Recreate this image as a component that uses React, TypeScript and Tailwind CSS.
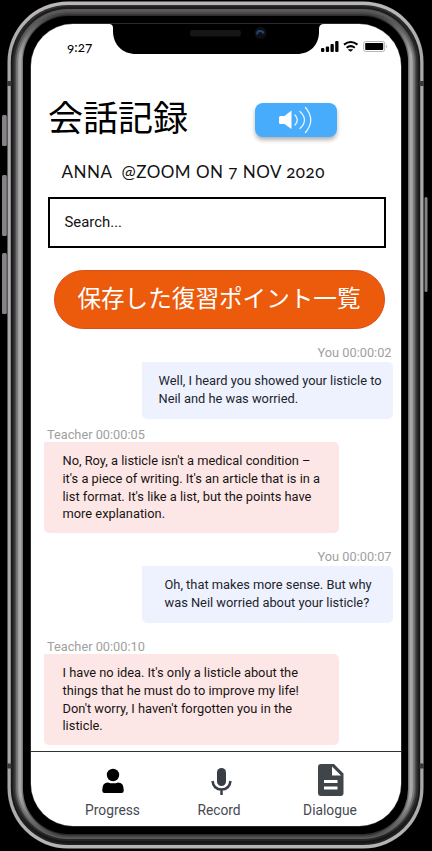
import React from "react";

const frameRings = [
  { x: 6.8, y: 0.8, r: 61, side: "#050505", top: "#050505", bottom: "#050505" },
  { x: 7.5, y: 1.5, r: 60.5, side: "#a9a7a9", top: "#b9b5b8", bottom: "#b5b3b5" },
  { x: 10.8, y: 5, r: 57, side: "#161616", top: "#303030", bottom: "#222222" },
  { x: 12.6, y: 6.5, r: 56, side: "#2d2d2d", top: "#1c1c1c", bottom: "#161616" },
  { x: 14.6, y: 9, r: 54, side: "#4e4e4e", top: "#5a5a5a", bottom: "#262626" },
  { x: 16.2, y: 11, r: 52, side: "#7a7a7a", top: "#555555", bottom: "#5c5c5c" },
  { x: 18.2, y: 12.5, r: 50, side: "#a8a8a8", top: "#444444", bottom: "#484848" },
  { x: 21.6, y: 14.5, r: 47, side: "#777777", top: "#2c2c2c", bottom: "#282828" },
  { x: 23, y: 16, r: 45, side: "#000000", top: "#000000", bottom: "#000000" },
];

function PhoneFrame() {
  return (
    <svg className="absolute inset-0" width="432" height="851" viewBox="0 0 432 851">
      <defs>
        {frameRings.map((f, i) => (
          <linearGradient key={i} id={`ring${i}`} gradientUnits="userSpaceOnUse" x1="0" y1="0" x2="0" y2="851">
            <stop offset="0.018" stopColor={f.top} />
            <stop offset="0.065" stopColor={f.side} />
            <stop offset="0.935" stopColor={f.side} />
            <stop offset="0.982" stopColor={f.bottom} />
          </linearGradient>
        ))}
      </defs>
      <g fill="#858385">
        <rect x="2" y="115" width="5" height="31" rx="1.5" />
        <rect x="2" y="175" width="5" height="61" rx="1.5" />
        <rect x="2" y="253" width="5" height="61" rx="1.5" />
        <rect x="424.500" y="197" width="3" height="95" rx="1.5" />
      </g>
      {frameRings.map((f, i) => (
        <rect key={i} x={f.x} y={f.y} width={431 - 2 * f.x} height={850 - 2 * f.y} rx={f.r} fill={`url(#ring${i})`} />
      ))}
      <g fill="#3a3a3a">
        <rect x="7" y="81" width="4.500" height="5" />
        <rect x="419.500" y="81" width="4.500" height="5" />
        <rect x="7" y="763.500" width="4.500" height="5" />
        <rect x="419.500" y="763.500" width="4.500" height="5" />
      </g>
    </svg>
  );
}

function Notch() {
  return (
    <svg className="absolute left-[75px] top-0" width="252" height="31" viewBox="106 24 252 31">
      <path d="M106 23H328V24H324Q319 24 319 29V32C319 45 310 54 297 54H136C123 54 113 45 113 31V28Q113 24 109 24H106Z" fill="#000" />
      <rect x="190" y="30" width="51" height="6.5" rx="3" fill="#161616" />
      <circle cx="260.500" cy="33" r="6" fill="#0d0f14" />
      <path d="M257.500 34.500Q256.500 31 260 31Q263 31 263.500 33.500" stroke="#214777" strokeWidth="2" fill="none" />
    </svg>
  );
}

function StatusIcons() {
  return (
    <svg className="absolute left-[289px] top-[16px]" width="70" height="14" viewBox="320 40 70 14">
      <g fill="#000">
        <rect x="321" y="48" width="3.300" height="4" rx="1" />
        <rect x="325.800" y="46.500" width="3.300" height="5.500" rx="1" />
        <rect x="330.500" y="44" width="3.300" height="8" rx="1" />
        <rect x="335.200" y="41" width="3.300" height="11" rx="1" />
        <path d="M348.500 49.200 352.500 49.200Q353.500 49.200 352.700 50L351 51.600 350.200 51.600 348.300 50Q347.500 49.200 348.500 49.200Z" />
      </g>
      <g fill="none" stroke="#000" strokeWidth="2">
        <path d="M344 44.600Q350.700 39.500 357.500 44.600" />
        <path d="M346.600 47.700Q350.700 44.600 354.800 47.700" />
      </g>
      <rect x="363.700" y="41.500" width="21" height="10" rx="2" fill="none" stroke="#b4b4b4" />
      <rect x="365.200" y="43" width="18" height="7" rx="0.700" fill="#000" />
      <path d="M386 45Q388 46.500 386 48Z" fill="#aaa" />
    </svg>
  );
}

type MessageProps = { who: string; time: string; lines: string[]; own?: boolean; indent?: string };

function Message({ who, time, lines, own, indent = "pl-[17px]" }: MessageProps) {
  return (
    <div className={own ? "ml-[110.5px] w-[251.5px]" : "ml-[13px] w-[295px]"}>
      <p
        className={`whitespace-nowrap text-[12.750px] leading-[15px] text-[#a0a0a0] ${
          own ? "h-[17px] pr-[1.5px] text-right" : "h-[15px] pl-[3px]"
        }`}
      >
        {who} {time}
      </p>
      <div
        className={`whitespace-nowrap rounded-r-[5px] rounded-bl-[5px] pt-[10px] text-[12.850px] leading-[17.800px] ${
          own ? `h-[57px] bg-[#eef2fe] text-[#22242c] ${indent}` : "h-[91px] bg-[#fde7e6] pl-[18.5px] text-[#181313]"
        }`}
      >
        {lines.map((l) => (
          <p key={l}>{l}</p>
        ))}
      </div>
    </div>
  );
}

export default function App() {
  return (
    <div className="relative h-[851px] w-[432px] overflow-hidden bg-black pl-[31px] pt-6 font-[Roboto,sans-serif]">
      <PhoneFrame />
      <main className="relative flex h-[801.5px] w-[369.5px] flex-col overflow-hidden rounded-[42px] bg-white shadow-[0_0_0_0.5px_#555]">
        <Notch />
        <StatusIcons />
        <div className="h-[72px] shrink-0 pl-[36px] pt-[15px] font-[Lato,sans-serif] text-[13.500px] leading-4 text-black [font-feature-settings:'onum']">9:27</div>
        <header className="flex h-[58px] shrink-0 pl-[17px]">
          <h1 className="-mt-[2px] w-[206.5px] whitespace-nowrap font-['Noto_Sans_CJK_JP',sans-serif] text-[35px] leading-[44px] text-black">会話記録</h1>
          <button className="mt-[7px] flex h-[34px] w-[82px] items-center justify-center rounded-[8px] bg-[#46acfb] shadow-[0_3px_4px_rgba(0,0,0,0.3)]">
            <svg width="36" height="30" viewBox="0 0 36 30" fill="none">
              <path d="M2.500 11H6.500L13.500 5.500V24L6.500 19H2.500Q1 19 1 17.500V12.500Q1 11 2.500 11Z" fill="#fff" />
              <g stroke="#e5f4ff" strokeWidth="1.300" strokeLinecap="round">
                <path d="M17 10Q21.500 15 17 20" />
                <path d="M22 6.500Q31 15 22 23.500" />
                <path d="M27.500 2.500Q38 15 27.500 27.500" />
              </g>
            </svg>
          </button>
        </header>
        <p className="h-[43px] shrink-0 whitespace-pre pl-[30.5px] pt-[7px] font-[Lato,sans-serif] text-[17px] leading-[22px] tracking-[0.480px] text-[#111] [font-feature-settings:'onum']">ANNA  @ZOOM ON 7 NOV 2020</p>
        <div className="ml-[16.5px] flex h-[51px] w-[338.5px] shrink-0 items-center border-2 border-black pl-[15px] text-[14.900px] text-[#111]">Search...</div>
        <button className="ml-[22.5px] mt-[22px] flex h-[59px] w-[331px] shrink-0 items-center justify-center whitespace-nowrap rounded-full border border-[#dc4c1c] bg-[#ec5a0c] pb-[3px] font-['Noto_Sans_CJK_JP',sans-serif] text-[23.600px] text-white">保存した復習ポイント一覧</button>
        <section className="flex h-[422px] shrink-0 flex-col pt-4">
          <Message own who="You" time="00:00:02" lines={["Well, I heard you showed your listicle to", "Neil and he was worried."]} />
          <div className="h-2 shrink-0" />
          <Message who="Teacher" time="00:00:05" lines={["No, Roy, a listicle isn't a medical condition –", "it's a piece of writing. It's an article that is in a", "list format. It's like a list, but the points have", "more explanation."]} />
          <div className="h-4 shrink-0" />
          <Message own who="You" time="00:00:07" indent="pl-[23px]" lines={["Oh, that makes more sense. But why", "was Neil worried about your listicle?"]} />
          <div className="h-4 shrink-0" />
          <Message who="Teacher" time="00:00:10" lines={["I have no idea. It's only a listicle about the", "things that he must do to improve my life!", "Don't worry, I haven't forgotten you in the", "listicle."]} />
        </section>
        <nav className="flex h-[75px] shrink-0 border-t border-[#333] pl-[28px] text-[13.800px] leading-4 text-[#474952]">
          <div className="flex w-[107px] flex-col items-center">
            <svg className="mb-[5px] mt-[13px]" width="40" height="32" viewBox="0 0 40 32">
              <circle cx="20" cy="10" r="6.200" fill="#000" />
              <path d="M9.300 24.500Q9.300 17.500 15 17.500Q20 19.200 25 17.500Q30.700 17.500 30.700 24.500V26Q30.700 28 28.500 28H11.500Q9.300 28 9.300 26Z" fill="#000" />
            </svg>
            <span>Progress</span>
          </div>
          <div className="flex w-[106px] flex-col items-center">
            <svg className="mb-[5px] mt-[13px]" width="40" height="32" viewBox="0 0 40 32">
              <rect x="18" y="3" width="9" height="18" rx="4.500" fill="#383d48" />
              <path d="M13.500 16Q14.500 24.500 22.500 24.500Q30.500 24.500 31.500 16M22.500 24V30" fill="none" stroke="#383d48" strokeWidth="2.500" />
            </svg>
            <span>Record</span>
          </div>
          <div className="flex w-[116px] flex-col items-center">
            <svg className="mb-[6px] mt-[12px]" width="40" height="32" viewBox="0 0 40 32">
              <path fillRule="evenodd" d="M11 0H24L33.500 9.500V29Q33.500 32 30.500 32H11Q8 32 8 29V3Q8 0 11 0ZM22 2.500V11.500H31ZM14 16V19H27.500V16ZM14 22.500V25.500H27.500V22.500Z" fill="#40454a" />
            </svg>
            <span>Dialogue</span>
          </div>
        </nav>
      </main>
    </div>
  );
}
